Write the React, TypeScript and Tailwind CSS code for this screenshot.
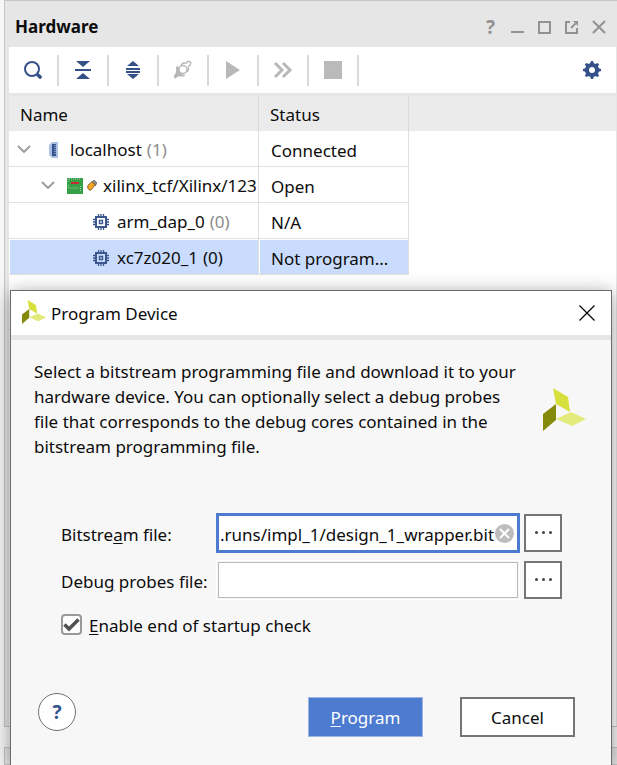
import type { ReactNode } from "react";

const NAVY = "#34518a";

function SearchIcon() {
  return (
    <svg width="20" height="20" viewBox="0 0 20 20" fill="none" stroke={NAVY}>
      <circle cx="9" cy="9" r="7" strokeWidth="2" />
      <path d="M13.5 14.5l1.5 1" strokeWidth="2" />
      <path d="M15.5 15.5l1.6 1.6" strokeWidth="3.6" strokeLinecap="round" />
    </svg>
  );
}

function CollapseIcon() {
  return (
    <svg width="18" height="20" viewBox="0 0 18 20" fill={NAVY}>
      <path d="M2 1h14L9 7zM1 9h16v2H1zM9 13l7 6H2z" />
    </svg>
  );
}

function ExpandIcon() {
  return (
    <svg width="18" height="20" viewBox="0 0 18 20" fill={NAVY}>
      <path d="M9 1l6 5H3zM2 8h14v2H2zM2 11h14v2H2zM3 14h12l-6 5z" />
    </svg>
  );
}

function ConnectIcon() {
  return (
    <svg width="20" height="20" viewBox="0 0 20 20" fill="none" stroke="#b8b8b8">
      <path d="M4.500 5.500L3 7.500v5L1 15.500V18l1.500.5L5 16.500h6l1.500-1.500-4-1-1.500-2-1-4z" fill="#b8b8b8" stroke="none" />
      <circle cx="10" cy="9.500" r="4" strokeWidth="1.500" />
      <path d="M8 5l2-2h3.500l1-1.500h2L18 3l-1 2-1.500 1v4L14 12" strokeWidth="1.300" />
    </svg>
  );
}

function PlayIcon() {
  return (
    <svg width="16" height="18" viewBox="0 0 16 18" fill="#b8b8b8">
      <path d="M1 0l14 9L1 18z" />
    </svg>
  );
}

function FastForwardIcon() {
  return (
    <svg width="20" height="18" viewBox="0 0 20 18" fill="none" stroke="#b8b8b8" strokeWidth="3">
      <path d="M2 2l7 7-7 7M10 2l7 7-7 7" />
    </svg>
  );
}

function StopIcon() {
  return <span className="block size-[18px] bg-[#bababa]" />;
}

function GearIcon() {
  const teeth = [0, 45, 90, 135, 180, 225, 270, 315];
  return (
    <svg width="18" height="18" viewBox="0 0 18 18">
      {teeth.map((angle) => (
        <path key={angle} d="M7 3L8 0h2l1 3z" fill={NAVY} transform={`rotate(${angle} 9 9)`} />
      ))}
      <circle cx="9" cy="9" r="5" fill="none" stroke={NAVY} strokeWidth="4" />
    </svg>
  );
}

function MinimizeIcon() {
  return (
    <svg width="14" height="14" viewBox="0 0 14 14" fill="#929292">
      <path d="M0 11h13v2H0z" />
    </svg>
  );
}

function MaximizeIcon() {
  return (
    <svg width="14" height="14" viewBox="0 0 14 14" fill="none" stroke="#929292" strokeWidth="2">
      <path d="M1 2h11v11H1z" />
    </svg>
  );
}

function FloatIcon() {
  return (
    <svg width="14" height="14" viewBox="0 0 14 14" fill="none" stroke="#929292" strokeWidth="2">
      <path d="M5 2H1v11h11V8" />
      <path d="M6 8l4.500-4.500" strokeWidth="1.800" />
      <path d="M8 1h5v5z" fill="#929292" stroke="none" />
    </svg>
  );
}

function CloseIcon() {
  return (
    <svg width="14" height="14" viewBox="0 0 14 14" stroke="#929292" strokeWidth="2">
      <path d="M1 1l12 12M13 1L1 13" />
    </svg>
  );
}

function ChevronIcon() {
  return (
    <svg className="mb-0.5 shrink-0" width="14" height="8" viewBox="0 0 14 8" fill="none" stroke="#9a9a9a" strokeWidth="1.800">
      <path d="M1 1l6 6 6-6" />
    </svg>
  );
}

function ServerIcon() {
  return (
    <svg width="10" height="16" viewBox="0 0 10 16">
      <path d="M3 0h6v16H3L0 13V3z" fill="#a9c0e2" />
      <path d="M3 2h4v12H3z" fill="#34518a" />
      <path d="M5 3.500h2M5 5.500h2M5 7.500h2M5 9.500h2M5 11.500h2" stroke="#7f9bc9" />
    </svg>
  );
}

function BoardIcon() {
  return (
    <svg width="16" height="16" viewBox="0 0 16 16">
      <path d="M0 0h16v16H0z" fill="#35a047" />
      <path d="M1 4V1h13M1.500 7v3H12M13.500 8v6" fill="none" stroke="#a5cfa9" strokeDasharray="1 1" />
      <path d="M4 4h8v2H4z" fill="#cc2936" />
    </svg>
  );
}

function CableIcon() {
  return (
    <svg width="10" height="11" viewBox="0 0 10 11">
      <path d="M5 2l2-2 3 3-2 3z" fill="#8d8d8d" stroke="#666666" strokeWidth="0.800" />
      <path d="M.8 5.500L4.800 1.800l3.400 3L4 10H2.500L.8 8.500z" fill="#f5a623" stroke="#7d5a20" strokeWidth="0.900" />
    </svg>
  );
}

function ChipIcon() {
  return (
    <svg width="16" height="16" viewBox="0 0 16 16" fill="none" stroke="#3c588f">
      <path d="M3 3h10v10H3z" strokeWidth="2" />
      <path d="M6.500 6.500h3v3h-3z" strokeWidth="1.400" />
      <path
        d="M5.500 0v2M8 0v2M10.500 0v2M5.500 14v2M8 14v2M10.500 14v2M0 5.500h2M0 8h2M0 10.500h2M14 5.500h2M14 8h2M14 10.500h2"
        strokeWidth="1.300"
      />
    </svg>
  );
}

function Logo({ className }: { className: string }) {
  return (
    <svg className={className} viewBox="0 0 43 43">
      <path d="M10 0l15 9 2 15L13 16z" fill="#d7e03c" />
      <path d="M0 26l13-10v16L0 43z" fill="#868a0c" />
      <path d="M13 31l15-7 15 7-14 7z" fill="#e3ea7c" />
    </svg>
  );
}

function IconButton({ label, className, children }: { label: string; className: string; children: ReactNode }) {
  return (
    <button type="button" aria-label={label} className={`flex shrink-0 items-center justify-center ${className}`}>
      {children}
    </button>
  );
}

const tools = [
  { label: "Search", icon: <SearchIcon /> },
  { label: "Collapse all", icon: <CollapseIcon /> },
  { label: "Expand all", icon: <ExpandIcon /> },
  { label: "Auto connect", icon: <ConnectIcon /> },
  { label: "Run trigger", icon: <PlayIcon /> },
  { label: "Run trigger immediate", icon: <FastForwardIcon /> },
  { label: "Stop trigger", icon: <StopIcon /> },
];

const windowControls = [
  { label: "Help", icon: <span className="text-[19px] font-bold text-[#929292]">?</span> },
  { label: "Minimize", icon: <MinimizeIcon /> },
  { label: "Maximize", icon: <MaximizeIcon /> },
  { label: "Float", icon: <FloatIcon /> },
  { label: "Close panel", icon: <CloseIcon /> },
];

const devices = [
  {
    name: "localhost",
    count: "(1)",
    status: "Connected",
    indent: "pl-2",
    icons: (
      <>
        <ChevronIcon />
        <span className="ml-[18px] mr-[11px] shrink-0"><ServerIcon /></span>
      </>
    ),
    selected: false,
  },
  {
    name: "xilinx_tcf/Xilinx/123",
    count: "",
    status: "Open",
    indent: "pl-8",
    icons: (
      <>
        <ChevronIcon />
        <span className="ml-3 mr-1 shrink-0"><BoardIcon /></span>
        <span className="mr-1.5 shrink-0"><CableIcon /></span>
      </>
    ),
    selected: false,
  },
  {
    name: "arm_dap_0",
    count: "(0)",
    status: "N/A",
    indent: "pl-[84px]",
    icons: <span className="mr-2 shrink-0"><ChipIcon /></span>,
    selected: false,
  },
  {
    name: "xc7z020_1",
    count: "(0)",
    status: "Not program...",
    indent: "pl-[83px]",
    icons: <span className="mr-2 shrink-0"><ChipIcon /></span>,
    selected: true,
  },
];

function HardwarePanel() {
  return (
    <section className="flex flex-1 flex-col border border-r-0 border-[#c6c6c6] bg-[#e6e6e6] pl-1">
      <header className="flex h-[46px] items-center pl-1.5 pr-[5px] pt-1.5">
        <h1 className="flex-1 text-[17px] font-bold">Hardware</h1>
        {windowControls.map((c) => (
          <IconButton key={c.label} label={c.label} className="h-7 w-[27px]">
            {c.icon}
          </IconButton>
        ))}
      </header>
      <div className="mr-px flex h-[46px] items-center bg-white">
        {tools.map((t) => (
          <div key={t.label} className="flex h-[31px] border-r-2 border-[#d9d9d9]">
            <IconButton label={t.label} className="w-12">
              {t.icon}
            </IconButton>
          </div>
        ))}
        <IconButton label="Settings" className="ml-auto size-12">
          <GearIcon />
        </IconButton>
      </div>
      <div className="mr-px mt-[3px] flex-1 bg-white">
        <table className="w-full table-fixed border-separate border-spacing-0 text-left">
          <colgroup>
            <col className="w-[250px]" />
            <col className="w-[150px]" />
            <col />
          </colgroup>
          <thead>
            <tr className="h-[35px] bg-[#ebebeb]">
              <th className="border-r border-[#d9d9d9] p-0 pl-[11px] pt-0.5 font-normal">Name</th>
              <th className="border-r border-[#d9d9d9] p-0 pl-[11px] pt-0.5 font-normal">Status</th>
              <td className="p-0" />
            </tr>
          </thead>
          <tbody>
            {devices.map((d) => (
              <tr key={d.name} className="h-9">
                <td className="border-b border-r border-[#e0e0e0] p-0">
                  <div
                    className={`flex h-[35px] items-center whitespace-nowrap pt-0.5 ${d.indent} ${
                      d.selected ? "border-l border-t border-white bg-[#cadcfd]" : ""
                    }`}
                  >
                    {d.icons}
                    <span>{d.name}</span>
                    {d.count && <span className={`ml-[5px] ${d.selected ? "" : "text-[#8c8c8c]"}`}>{d.count}</span>}
                  </div>
                </td>
                <td className="border-b border-r border-[#e0e0e0] p-0">
                  <div
                    className={`flex h-[35px] items-center pt-1 ${
                      d.selected ? "border-l border-t border-white bg-[#cadcfd] pl-[11px]" : "pl-3"
                    }`}
                  >
                    {d.status}
                  </div>
                </td>
                <td className="p-0" />
              </tr>
            ))}
          </tbody>
        </table>
      </div>
    </section>
  );
}

function BrowseButton({ label }: { label: string }) {
  return (
    <button
      type="button"
      aria-label={label}
      className="flex size-[38px] items-center justify-center gap-1 border-2 border-[#757575] bg-white pb-0.5"
    >
      <span className="size-[3px] rounded-full bg-[#444444]" />
      <span className="size-[3px] rounded-full bg-[#444444]" />
      <span className="size-[3px] rounded-full bg-[#444444]" />
    </button>
  );
}

function ProgramDialog() {
  return (
    <div
      role="dialog"
      aria-labelledby="dialog-title"
      className="absolute bottom-0 left-2.5 right-[5px] top-[290px] border border-b-0 border-[#6b6b6b] bg-[#f7f7f7] shadow-[0_3px_18px_rgba(0,0,0,0.4)]"
    >
      <header className="flex h-[49px] items-center border-b-[5px] border-[#e6e6e6] bg-white pl-[11px] pr-[11px]">
        <Logo className="mb-0.5 size-6" />
        <h2 id="dialog-title" className="ml-[5px] flex-1 pt-0.5">
          Program Device
        </h2>
        <IconButton label="Close" className="size-[26px]">
          <svg width="16" height="16" viewBox="0 0 16 16" stroke="#000000" strokeWidth="1.200">
            <path d="M.5.5l15 15M15.500.5l-15 15" />
          </svg>
        </IconButton>
      </header>

      <div className="flex items-center justify-between pl-[23px] pr-[25px] pt-[19px]">
        <p className="max-w-[492px] leading-[25px]">
          Select a bitstream programming file and download it to your
          <br />
          hardware device. You can optionally select a debug probes
          <br />
          file that corresponds to the debug cores contained in the
          <br />
          bitstream programming file.
        </p>
        <Logo className="size-[43px] shrink-0" />
      </div>

      <form className="pl-[50px] pr-[49px] pt-[54px]">
        <div className="grid grid-cols-[151px_1fr_38px] items-center gap-x-1 gap-y-[7px]">
          <label htmlFor="bitstream" className="pt-1">
            Bitstre<u className="underline-offset-2">a</u>m file:
          </label>
          <div className="flex h-10 items-center border-[3px] border-[#4d7bd0] bg-white pr-[3px]">
            <input
              id="bitstream"
              type="text"
              defaultValue=".runs/impl_1/design_1_wrapper.bit"
              className="h-full min-w-0 flex-1 bg-transparent pl-px pt-0.5 outline-none"
            />
            <IconButton label="Clear" className="size-[19px] rounded-full bg-[#bdbdbd]">
              <svg width="11" height="11" viewBox="0 0 11 11" stroke="#ffffff" strokeWidth="2">
                <path d="M1 1l9 9M10 1l-9 9" />
              </svg>
            </IconButton>
          </div>
          <BrowseButton label="Browse for bitstream file" />

          <label htmlFor="probes" className="pt-1">
            Debu<u className="underline-offset-2">g</u> probes file:
          </label>
          <div className="h-10 border border-white p-px">
            <input
              id="probes"
              type="text"
              className="h-full w-full border border-[#b8b8b8] bg-white px-1 outline-none"
            />
          </div>
          <BrowseButton label="Browse for debug probes file" />
        </div>

        <div className="mt-2.5 flex items-center gap-[7px]">
          <span className="relative flex size-[21px]">
            <input
              id="startup-check"
              type="checkbox"
              defaultChecked
              className="peer size-full appearance-none rounded-[4px] border-2 border-[#999999] bg-white"
            />
            <svg
              className="pointer-events-none absolute inset-0 hidden peer-checked:block"
              width="21"
              height="21"
              viewBox="0 0 21 21"
              fill="none"
              stroke="#505050"
              strokeWidth="3.400"
            >
              <path d="M3.500 10.500l4.500 4.500L17.500 5.500" />
            </svg>
          </span>
          <label htmlFor="startup-check" className="pt-1">
            <u className="underline-offset-2">E</u>nable end of startup check
          </label>
        </div>
      </form>

      <footer className="flex items-start gap-[37px] pl-[27px] pr-9 pt-[55px]">
        <button
          type="button"
          aria-label="Help"
          className="mr-auto size-[38px] rounded-full border border-[#707070] bg-white text-[19px] font-bold text-[#34518a]"
        >
          ?
        </button>
        <button type="button" className="mt-1 h-10 w-[115px] border border-[#9db5e3] bg-[#4d7bd0] pt-0.5 text-white">
          <u className="underline-offset-2">P</u>rogram
        </button>
        <button type="button" className="mt-1 h-10 w-[115px] border-2 border-[#757575] bg-white pt-0.5">
          Cancel
        </button>
      </footer>
    </div>
  );
}

export default function App() {
  return (
    <main className="relative flex h-screen flex-col overflow-hidden bg-[#f7f7f7] pl-1 font-['Noto_Sans',sans-serif] text-[17px] leading-6 text-[#0c0c0c]">
      <HardwarePanel />
      <div className="mt-5 h-[18px] border border-r-0 border-[#c6c6c6] bg-[#e6e6e6]" />
      <ProgramDialog />
    </main>
  );
}
